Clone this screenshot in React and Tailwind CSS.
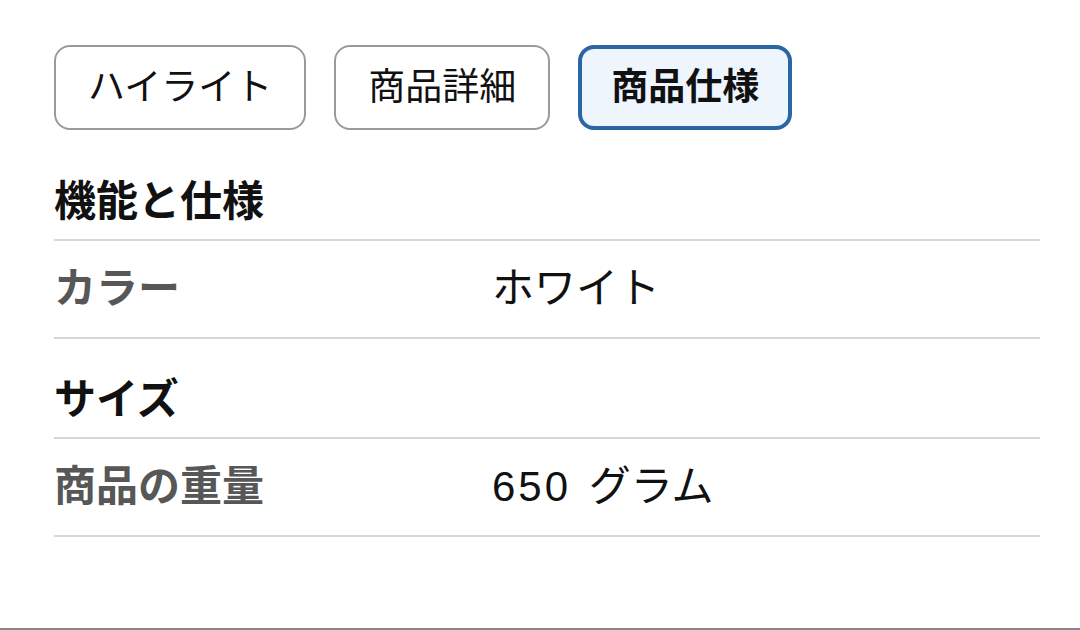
import React from "react";

const font = { fontFamily: '"Liberation Sans", "Noto Sans CJK JP", sans-serif' };

function Tab({ label, active }) {
  return active ? (
    <div className="h-[85px] flex items-center justify-center px-[29px] rounded-[16px] border-[4px] border-[#2a66a4] bg-[#eef5fc] text-[37px] font-bold text-[#111] leading-none">
      {label}
    </div>
  ) : (
    <div className="h-[85px] flex items-center justify-center px-[32px] rounded-[16px] border-2 border-[#9a9a9a] bg-white text-[37px] text-[#111] leading-none">
      {label}
    </div>
  );
}

function Heading({ children }) {
  return (
    <div className="pt-[41px] pb-[17px] border-b-2 border-[#d6d6d6] text-[42px] leading-[40px] font-bold text-[#111]">
      {children}
    </div>
  );
}

function Row({ label, children }) {
  return (
    <div className="h-[98px] flex items-center border-b-2 border-[#d6d6d6] text-[42px] leading-[40px]">
      <div className="w-[438px] font-bold text-[#575757]">{label}</div>
      <div className="text-[#111]">{children}</div>
    </div>
  );
}

export default function App() {
  return (
    <div style={font} className="w-[1080px] h-[630px] bg-white border-b-2 border-[#888] pt-[45px] pl-[54px] pr-[40px] overflow-hidden">
      <div className="flex gap-[28px]">
        <Tab label="ハイライト" />
        <Tab label="商品詳細" />
        <Tab label="商品仕様" active />
      </div>
      <div className="mt-[11px]">
        <Heading>機能と仕様</Heading>
        <Row label="カラー">ホワイト</Row>
        <Heading>サイズ</Heading>
        <Row label="商品の重量">
          <span className="tracking-[3px] mr-[6px]">650</span> グラム
        </Row>
      </div>
    </div>
  );
}
